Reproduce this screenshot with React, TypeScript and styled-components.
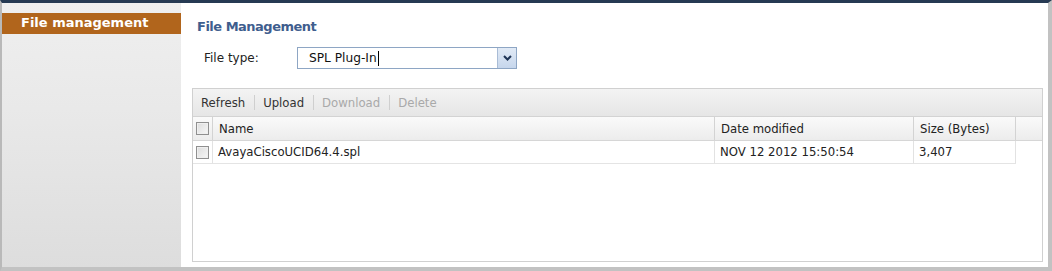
import * as React from 'react'
import styled, { createGlobalStyle, css } from 'styled-components'

const GlobalStyle = createGlobalStyle`
  html, body {
    margin: 0;
    padding: 0;
    background: #ffffff;
  }
  body {
    font-family: "DejaVu Sans", Verdana, sans-serif;
    color: #333333;
  }
`

const Frame = styled.div`
  box-sizing: border-box;
  width: 1052px;
  height: 271px;
  display: flex;
  border-top: 3px solid #263a53;
  border-left: 2px solid #b9b9b9;
  border-right: 4px solid #c2c2c2;
  border-bottom: 4px solid #c2c2c2;
  background: #ffffff;
`

const Sidebar = styled.div`
  width: 179px;
  flex-shrink: 0;
  padding-top: 10px;
  background: linear-gradient(to bottom, #efefef 0%, #e9e9e9 40%, #dddddd 100%);
`

const SidebarItem = styled.div`
  height: 21px;
  line-height: 20px;
  padding-left: 19px;
  background: #b1651c;
  color: #ffffff;
  font-weight: bold;
  font-size: 13px;
`

const Main = styled.div`
  flex: 1;
  display: flex;
  flex-direction: column;
  padding: 15px 5px 5px 11px;
  min-width: 0;
`

const Title = styled.div`
  padding-left: 5px;
  height: 17px;
  line-height: 17px;
  font-size: 13px;
  letter-spacing: -0.5px;
  font-weight: bold;
  color: #3f5e8e;
`

const FieldRow = styled.div`
  display: flex;
  align-items: center;
  margin-top: 12px;
  padding-left: 12px;
  height: 22px;
`

const Label = styled.div`
  width: 93px;
  font-size: 12px;
  color: #222222;
`

const SelectBox = styled.div`
  box-sizing: border-box;
  width: 220px;
  height: 22px;
  display: flex;
  border: 1px solid #8ea6c4;
  background: #ffffff;
`

const SelectValue = styled.div`
  flex: 1;
  display: flex;
  align-items: center;
  padding-left: 11px;
  font-size: 12.2px;
  color: #111111;
`

const Caret = styled.span`
  display: inline-block;
  width: 1px;
  height: 15px;
  margin-left: 1px;
  background: #000000;
`

const SelectButton = styled.div`
  width: 18px;
  display: flex;
  align-items: center;
  justify-content: center;
  border-left: 1px solid #a9bcd6;
  background: linear-gradient(to bottom, #e1eaf6, #c6d6ec);
`

const Grid = styled.div`
  margin-top: 19px;
  flex: 1;
  display: flex;
  flex-direction: column;
  border: 1px solid #d0d0d0;
  background: #ffffff;
`

const Toolbar = styled.div`
  height: 27px;
  display: flex;
  align-items: center;
  padding-left: 8px;
  background: linear-gradient(to bottom, #f3f3f3, #e6e6e6);
  border-bottom: 1px solid #d3d3d3;
  font-size: 11.7px;
`

interface ToolProps {
  disabled?: boolean
}

const Tool = styled.span<ToolProps>`
  color: #333333;
  ${(props) =>
    props.disabled &&
    css`
      color: #a9a9a9;
    `}
`

const ToolSeparator = styled.span`
  display: inline-block;
  width: 1px;
  height: 15px;
  margin: 0 8px 0 9px;
  background: #cfcfcf;
`

const Row = styled.div<{ header?: boolean }>`
  display: grid;
  grid-template-columns: 20px 502px 199px 102px 1fr;
  height: 23px;
  font-size: 11.7px;
  ${(props) =>
    props.header &&
    css`
      background: linear-gradient(to bottom, #fafafa, #ececec);
      border-bottom: 1px solid #d6d6d6;
    `}
`

const Cell = styled.div<{ header?: boolean; filler?: boolean }>`
  display: flex;
  align-items: center;
  padding-left: 5px;
  border-right: 1px solid #e2e2e2;
  border-bottom: 1px solid #e4e4e4;
  color: #222222;
  white-space: nowrap;
  ${(props) =>
    props.header &&
    css`
      border-right: 1px solid #d3d3d3;
      border-bottom: none;
      padding-left: 6px;
    `}
  ${(props) =>
    props.filler &&
    css`
      border-right: none;
      border-bottom: none;
    `}
`

const CheckCell = styled(Cell)`
  padding-left: 3px;
`

const CheckBox = styled.span`
  box-sizing: border-box;
  display: inline-block;
  width: 13px;
  height: 13px;
  border: 1px solid #8f8f8f;
  background: linear-gradient(135deg, #dcdcdc, #f7f7f7);
  box-shadow: inset 0 0 0 1px #efefef;
`

const Chevron = () => (
  <svg width="9" height="6" viewBox="0 0 9 6">
    <path d="M1 1 L4.5 4.5 L8 1" fill="none" stroke="#1f3556" strokeWidth="2" />
  </svg>
)

const files = [{ name: 'AvayaCiscoUCID64.4.spl', modified: 'NOV 12 2012 15:50:54', size: '3,407' }]

export default function App(): JSX.Element {
  return (
    <>
      <GlobalStyle />
      <Frame>
        <Sidebar>
          <SidebarItem>File management</SidebarItem>
        </Sidebar>
        <Main>
          <Title>File Management</Title>
          <FieldRow>
            <Label>File type:</Label>
            <SelectBox>
              <SelectValue>
                SPL Plug-In
                <Caret />
              </SelectValue>
              <SelectButton>
                <Chevron />
              </SelectButton>
            </SelectBox>
          </FieldRow>
          <Grid>
            <Toolbar>
              <Tool>Refresh</Tool>
              <ToolSeparator />
              <Tool>Upload</Tool>
              <ToolSeparator />
              <Tool disabled>Download</Tool>
              <ToolSeparator />
              <Tool disabled>Delete</Tool>
            </Toolbar>
            <Row header>
              <CheckCell header>
                <CheckBox />
              </CheckCell>
              <Cell header>Name</Cell>
              <Cell header>Date modified</Cell>
              <Cell header>Size (Bytes)</Cell>
              <Cell header filler />
            </Row>
            {files.map((file) => (
              <Row key={file.name}>
                <CheckCell>
                  <CheckBox />
                </CheckCell>
                <Cell>{file.name}</Cell>
                <Cell>{file.modified}</Cell>
                <Cell>{file.size}</Cell>
                <Cell filler />
              </Row>
            ))}
          </Grid>
        </Main>
      </Frame>
    </>
  )
}
